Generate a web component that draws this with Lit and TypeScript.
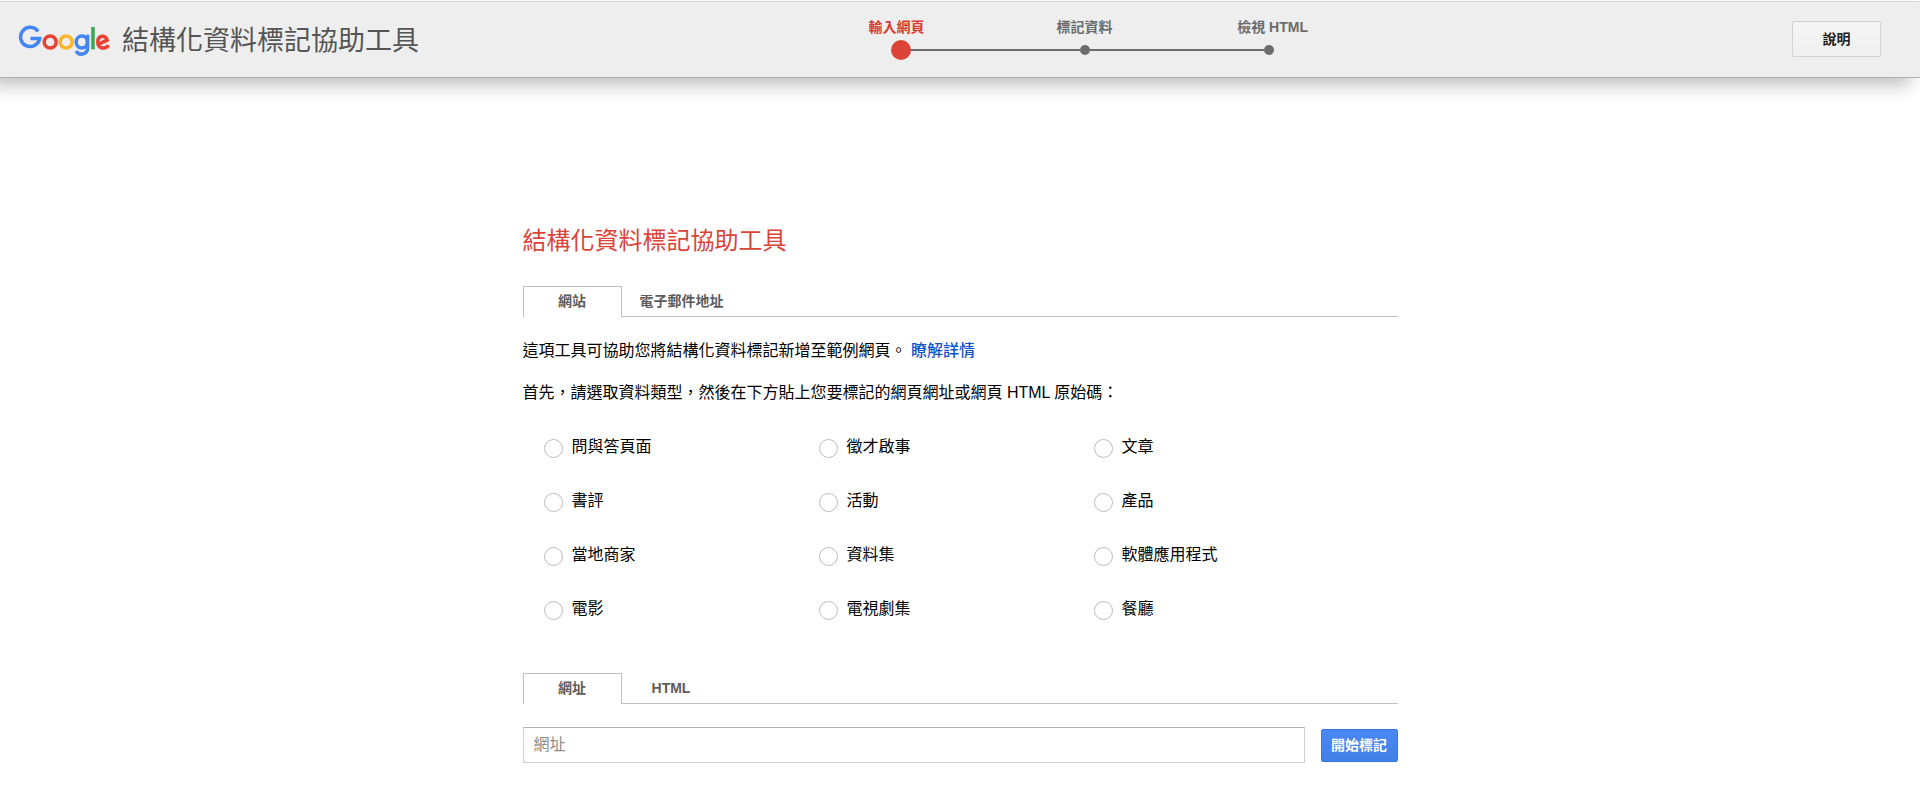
import { LitElement, html, css, svg } from "lit";
import { customElement, state } from "lit/decorators.js";

const FONT = css`"Liberation Sans", "Noto Sans CJK TC", sans-serif`;

@customElement("brand-logo")
class BrandLogo extends LitElement {
  static styles = css`
    :host { display: block; }
    .logo { display: block; width: 92px; height: 32px; fill: none; stroke-width: 3.5; }
    .blue { stroke: #4285f4; }
    .red { stroke: #ea4335; }
    .yellow { stroke: #fbb52a; }
    .green { stroke: #34a853; }
  `;
  render() {
    return html`<svg class="logo" viewBox="18 24 92 32" role="img" aria-label="Google">
      ${svg`
        <path class="blue" d="M38 30.4 A9.6 9.6 0 1 0 39.6 37.6 H30.4"/>
        <circle class="red" cx="50.2" cy="41" r="6"/>
        <circle class="yellow" cx="66.2" cy="41" r="6"/>
        <ellipse class="blue" cx="81.8" cy="41" rx="5.6" ry="6"/>
        <path class="blue" d="M87.6 33.8 V46.8 C87.6 54.6 78.2 54.6 76.2 49.8"/>
        <path class="green" d="M93 26 V48.4"/>
        <path class="red" d="M98 43.3 L107.2 39.2 C105.8 33.4 97.8 33.8 97.8 41 C97.8 48.2 105.8 48.6 108.4 44.2"/>
      `}
    </svg>`;
  }
}

@customElement("app-header")
class AppHeader extends LitElement {
  static styles = css`
    :host { display: block; padding-top: 1px; }
    .bar {
      display: grid;
      grid-template-columns: 79fr auto 52fr;
      align-items: center;
      box-sizing: border-box;
      min-height: 77px;
      padding: 0 39px 2px 18px;
      background: #eee;
      border-top: 1px solid #d8d8d8;
      border-bottom: 1px solid #b2b2b2;
      box-shadow: -10px 8px 16px rgba(0, 0, 0, 0.24);
    }
    .brand { display: flex; align-items: center; gap: 12px; padding-top: 4px; }
    .title { margin: 0; font-size: 27px; line-height: 40px; font-weight: 400; color: #555; white-space: nowrap; }
    .steps {
      display: grid;
      grid-template-columns: repeat(3, 184px);
      margin: 0;
      padding: 0;
      list-style: none;
      font-size: 14px;
      line-height: 20px;
      font-weight: 700;
      color: #6b6b6b;
    }
    .step { display: flex; flex-direction: column; align-items: center; gap: 3px; white-space: nowrap; }
    .step:first-child .label { padding-right: 8px; }
    .step:last-child .label { padding-left: 8px; }
    .track { display: flex; align-items: center; align-self: stretch; height: 20px; }
    .line { flex: 1; height: 2px; background: #6b6b6b; }
    .step:first-child .line:first-child, .step:last-child .line:last-child { background: none; }
    .dot { width: 10px; height: 10px; border-radius: 50%; background: #6b6b6b; }
    .current { color: #d73d32; }
    .current .dot { width: 20px; height: 20px; background: #db4437; }
    .help {
      justify-self: end;
      width: 89px;
      height: 36px;
      padding: 0;
      border: 1px solid #d2d2d2;
      border-radius: 2px;
      background: linear-gradient(#f5f5f5, #f0f0f0);
      font: 700 14px/20px ${FONT};
      color: #222;
    }
  `;
  render() {
    const steps = ["輸入網頁", "標記資料", "檢視 HTML"];
    return html`<header class="bar">
      <div class="brand"><brand-logo></brand-logo><h1 class="title">結構化資料標記協助工具</h1></div>
      <ol class="steps">
        ${steps.map((s, i) => html`<li class="step ${i === 0 ? "current" : ""}">
          <span class="label">${s}</span>
          <span class="track"><span class="line"></span><span class="dot"></span><span class="line"></span></span>
        </li>`)}
      </ol>
      <button class="help" type="button">說明</button>
    </header>`;
  }
}

@customElement("app-root")
class AppRoot extends LitElement {
  @state() private site = 0;
  @state() private source = 0;

  static styles = css`
    :host { display: block; font-family: ${FONT}; color: #000; }
    .content { max-width: 875px; margin: 0 auto; padding: 143px 0 24px; }
    .heading { margin: 0; font-size: 24px; line-height: 40px; font-weight: 400; color: #db4437; }
    .tabs { display: flex; border-bottom: 1px solid #c0c0c0; }
    .tab {
      box-sizing: border-box;
      min-width: 99px;
      height: 31px;
      margin-bottom: -1px;
      padding: 0 17px 3px;
      border: 1px solid transparent;
      border-bottom: 0;
      background: none;
      font: 700 14px/20px ${FONT};
      color: #5c5c5c;
    }
    .tab.active { border-color: #c0c0c0; background: #fff; }
    .site-tabs { margin-top: 25px; }
    .text { margin: 0; font-size: 16px; line-height: 24px; }
    .intro { margin-top: 22px; }
    .lead { margin-top: 18px; }
    .link { color: #15c; font-weight: 500; text-decoration: none; }
    .types {
      display: grid;
      grid-template-columns: repeat(3, 275px);
      row-gap: 30px;
      margin: 30px 0 0;
      padding: 0 0 0 21px;
      border: 0;
    }
    .type { display: flex; align-items: flex-start; gap: 9px; font-size: 16px; line-height: 24px; }
    .radio {
      appearance: none;
      box-sizing: border-box;
      width: 19px;
      height: 19px;
      margin: 4px 0 0;
      border: 1px solid #bdbdbd;
      border-radius: 50%;
      background: #fff;
    }
    .radio:checked { background: radial-gradient(#666 0 4px, #fff 5px); }
    .source-tabs { margin-top: 52px; }
    .form { display: flex; align-items: center; gap: 16px; margin-top: 23px; }
    .url {
      flex: 1;
      min-width: 0;
      box-sizing: border-box;
      height: 36px;
      padding: 0 10px;
      border: 1px solid #d0d0d0;
      border-top-color: #b5b5b5;
      font: 400 16px/24px ${FONT};
    }
    .url::placeholder { color: #8c8c8c; opacity: 1; }
    .start {
      box-sizing: border-box;
      width: 77px;
      height: 33px;
      padding: 0;
      border: 1px solid #3079ed;
      border-radius: 2px;
      background: linear-gradient(#4889f7, #427fe6);
      font: 700 14px/20px ${FONT};
      color: #fff;
    }
  `;

  private tabs(labels: string[], selected: number, cls: string, pick: (i: number) => void) {
    return html`<div class="tabs ${cls}" role="tablist">
      ${labels.map((l, i) => html`<button type="button" role="tab" class="tab ${i === selected ? "active" : ""}"
        aria-selected=${i === selected} @click=${() => pick(i)}>${l}</button>`)}
    </div>`;
  }

  render() {
    const types = ["問與答頁面", "徵才啟事", "文章", "書評", "活動", "產品", "當地商家", "資料集", "軟體應用程式", "電影", "電視劇集", "餐廳"];
    return html`
      <app-header></app-header>
      <main class="content">
        <h2 class="heading">結構化資料標記協助工具</h2>
        ${this.tabs(["網站", "電子郵件地址"], this.site, "site-tabs", (i) => (this.site = i))}
        <p class="text intro">這項工具可協助您將結構化資料標記新增至範例網頁。 <a class="link" href="#">瞭解詳情</a></p>
        <p class="text lead">首先，請選取資料類型，然後在下方貼上您要標記的網頁網址或網頁 HTML 原始碼：</p>
        <fieldset class="types" aria-label="資料類型">
          ${types.map((t) => html`<label class="type"><input class="radio" type="radio" name="type" value=${t} />${t}</label>`)}
        </fieldset>
        ${this.tabs(["網址", "HTML"], this.source, "source-tabs", (i) => (this.source = i))}
        <form class="form" @submit=${(e: Event) => e.preventDefault()}>
          <input class="url" type="text" placeholder="網址" aria-label="網址" />
          <button class="start" type="submit">開始標記</button>
        </form>
      </main>`;
  }
}
